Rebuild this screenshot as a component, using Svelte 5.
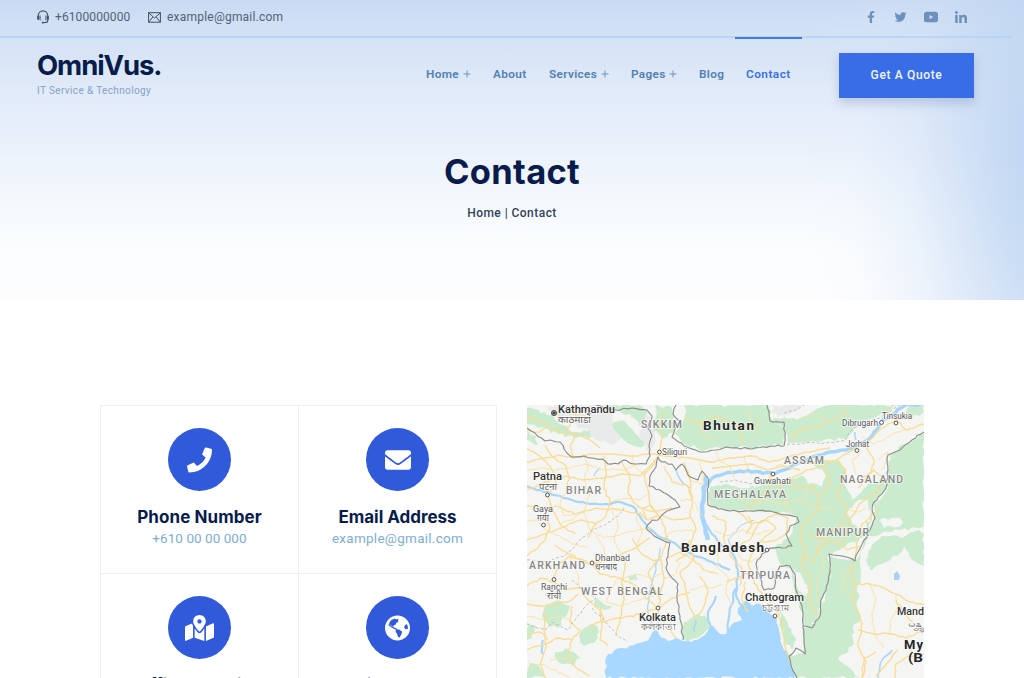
<script>
  const nav = [
    { label: 'Home', more: true, w: 45 },
    { label: 'About', w: 34 },
    { label: 'Services', more: true, w: 60 },
    { label: 'Pages', more: true, w: 46 },
    { label: 'Blog', w: 25 },
    { label: 'Contact', active: true, w: 45 }
  ];

  const social = [
    { name: 'facebook', box: '0 0 320 512', w: 8, d: 'M279.14 288l14.22-92.66h-88.91v-60.13c0-25.35 12.42-50.06 52.24-50.06h40.42V6.26S260.43 0 225.36 0c-73.22 0-121.08 44.38-121.08 124.72v70.62H22.89V288h81.39v224h100.17V288z' },
    { name: 'twitter', box: '0 0 512 512', w: 13, d: 'M459.37 151.716c.325 4.548.325 9.097.325 13.645 0 138.72-105.583 298.558-298.558 298.558-59.452 0-114.68-17.219-161.137-47.106 8.447.974 16.568 1.299 25.34 1.299 49.055 0 94.213-16.568 130.274-44.832-46.132-.975-84.792-31.188-98.112-72.772 6.498.974 12.995 1.624 19.818 1.624 9.421 0 18.843-1.3 27.614-3.573-48.081-9.747-84.143-51.98-84.143-102.985v-1.299c13.969 7.797 30.214 12.67 47.431 13.319-28.264-18.843-46.781-51.005-46.781-87.391 0-19.492 5.197-37.36 14.294-52.954 51.655 63.675 129.3 105.258 216.365 109.807-1.624-7.797-2.599-15.918-2.599-24.04 0-57.828 46.782-104.934 104.934-104.934 30.213 0 57.502 12.67 76.67 33.137 23.715-4.548 46.456-13.32 66.599-25.34-7.798 24.366-24.366 44.833-46.132 57.827 21.117-2.273 41.584-8.122 60.426-16.243-14.292 20.791-32.161 39.308-52.628 54.253z' },
    { name: 'youtube', box: '0 0 14 12', w: 14, d: 'M2.500 .8h9a2.500 2.500 0 0 1 2.500 2.500v5.400a2.500 2.500 0 0 1-2.500 2.500h-9a2.500 2.500 0 0 1-2.500-2.500V3.300a2.500 2.500 0 0 1 2.500-2.500zM5.500 3.900v4.300L9.200 6.050z' },
    { name: 'linkedin', box: '0 0 448 448', w: 12, d: 'M100.28 448H7.4V148.9h92.88zM53.79 108.1C24.09 108.1 0 83.5 0 53.8a53.79 53.79 0 0 1 107.58 0c0 29.7-24.1 54.3-53.79 54.3zM447.9 448h-92.68V302.4c0-34.7-.7-79.2-48.29-79.2-48.29 0-55.69 37.7-55.69 76.7V448h-92.78V148.9h89.08v40.8h1.3c12.4-23.5 42.69-48.3 87.88-48.3 94 0 111.28 61.9 111.28 142.3V448z' }
  ];

  const cards = [
    { title: 'Phone Number', ls: 0.08, text: '+610 00 00 000', tls: 0.05, box: '0 0 512 512', w: 25, d: 'M493.4 24.6l-104-24c-11.3-2.6-22.9 3.3-27.5 13.9l-48 112c-4.2 9.8-1.4 21.3 6.9 28l60.6 49.6c-36 76.7-98.9 140.5-177.2 177.2l-49.6-60.6c-6.8-8.3-18.2-11.1-28-6.9l-112 48C3.9 366.5-2 378.1.6 389.4l24 104C27.1 504.2 36.7 512 48 512c256.1 0 464-207.5 464-464 0-11.2-7.7-20.9-18.6-23.4z' },
    { title: 'Email Address', ls: -0.03, text: 'example@gmail.com', tls: 0.26, box: '0 0 512 512', w: 26, d: 'M502.3 190.8c3.9-3.1 9.7-.2 9.7 4.7V400c0 26.5-21.5 48-48 48H48c-26.5 0-48-21.5-48-48V195.6c0-5 5.7-7.8 9.7-4.7 22.4 17.4 52.1 39.5 154.1 113.6 21.1 15.4 56.7 47.8 92.2 47.6 35.7.3 72-32.8 92.3-47.6 102-74.1 131.6-96.3 154-113.7zM256 320c23.2.4 56.6-29.2 73.4-41.4 132.7-96.3 142.8-104.7 173.4-128.7 5.8-4.5 9.2-11.5 9.2-18.9v-19c0-26.5-21.5-48-48-48H48c-26.5 0-48 21.5-48 48v19c0 7.400 3.400 14.300 9.200 18.900 30.600 23.900 40.700 32.400 173.400 128.700 16.800 12.200 50.200 41.800 73.400 41.400z' },
    { title: 'Office Location', ls: -0.1, text: '', tls: 0, box: '0 0 576 512', w: 29, d: 'M288 0c-69.59 0-126 56.41-126 126 0 56.26 82.35 158.8 113.9 196.02 6.39 7.54 17.82 7.54 24.2 0C331.65 284.8 414 182.26 414 126 414 56.41 357.59 0 288 0zm0 168c-23.2 0-42-18.8-42-42s18.8-42 42-42 42 18.8 42 42-18.8 42-42 42zM20.12 215.95A32.006 32.006 0 0 0 0 245.66v250.32c0 11.32 11.43 19.06 21.94 14.86L160 448V214.92c-8.84-15.98-16.07-31.54-21.25-46.42L20.12 215.95zM288 359.67c-14.07 0-27.38-6.18-36.51-16.96-19.66-23.2-40.57-49.62-59.49-76.72v182l192 64V266c-18.92 27.09-39.82 53.52-59.49 76.72-9.13 10.77-22.44 16.95-36.51 16.95zm266.06-198.51L416 224v288l139.88-55.95A31.996 31.996 0 0 0 576 426.34V176.02c0-11.32-11.43-19.06-21.94-14.86z' },
    { title: 'Social Network', ls: -0.2, text: '', tls: 0, box: '0 0 74 74', w: 25, d: 'M37 0A37 37 0 1 1 37 74A37 37 0 1 1 37 0zM12 24L17 30L25 35L32 37L36 41L43 42L51 48L48 57L42 66L38 63L36 54L31 48L33 42L23 38L17 34L10 28zM12 23L18 14L28 9L33 12L39 9L39 19L33 22L32 27L26 29L25 34L17 29zM64 25L58 30L57 37L62 41L68 39L67 30z' }
  ];

  // Turns a sparse polyline into a finely wobbling one with a fixed pseudo-random sequence.
  function rough(str, amp = 1.2, close = false) {
    const p = str.split(' ').map((s) => s.split(',').map(Number));
    if (close) p.push(p[0]);
    let seed = Math.abs(Math.round(p[0][0] * 31 + p[0][1] * 17)) + 7;
    const rnd = () => ((seed = (seed * 16807) % 2147483647) / 2147483647 - 0.5) * 2 * amp;
    let d = 'M' + p[0];
    for (let i = 1; i < p.length; i++) {
      const [ax, ay] = p[i - 1];
      const [bx, by] = p[i];
      const n = Math.max(1, Math.round(Math.hypot(bx - ax, by - ay) / 4));
      for (let k = 1; k < n; k++) {
        d += `L${(ax + ((bx - ax) * k) / n + rnd()).toFixed(1)},${(ay + ((by - ay) * k) / n + rnd()).toFixed(1)}`;
      }
      d += `L${bx},${by}`;
    }
    return close ? d + 'Z' : d;
  }

  const forests = [
    '527,408 545,412 560,424 572,432 590,430 592,436 575,438 558,434 545,428 527,424',
    '606,405 640,405 648,412 640,424 630,414 612,412',
    '612,426 622,420 634,432 645,446 634,446 620,436',
    '655,405 672,408 674,432 662,438 654,430',
    '684,405 768,405 772,420 784,428 784,444 752,448 724,447 700,450 682,442 674,434 682,424 686,412',
    '772,420 800,418 830,405 898,405 882,416 860,424 848,438 820,442 788,444 784,428',
    '710,486 724,484 744,488 766,484 786,480 806,476 816,462 838,460 846,472 844,484 852,500 868,484 884,478 886,490 872,506 872,520 866,536 842,548 828,556 832,574 824,594 816,622 806,626 797,600 792,567 782,565 774,548 790,536 797,516 770,511 730,510 710,505',
    '924,434 906,444 890,456 888,478 886,492 874,506 875,522 866,540 860,554 858,590 868,614 854,624 852,646 838,658 860,678 797,678 788,656 804,654 804,628 816,624 826,592 831,572 830,556 856,560 866,536 900,530 924,526',
    '875,582 866,560 872,545 882,536 902,538 918,530 924,534 924,566 912,560 904,546 898,562 886,570',
    '924,412 912,418 906,410 912,405 924,405',
    '546,604 558,600 570,606 566,616 558,628 548,624 542,616',
    '584,628 594,624 599,632 595,642 584,646 579,636',
    '555,652 566,648 574,652 580,658 572,666 558,662',
    '527,622 536,626 532,638 527,640',
    '528,660 540,668 548,678 527,678',
    '684,622 698,614 708,618 710,628 700,636 688,642 682,636',
    '596,598 612,606 604,610 594,606',
    '527,430 536,436 538,445 527,440',
    '628,576 636,574 638,580 630,581',
    '780,606 786,620 796,640 792,650 784,640 780,622'
  ];

  const pale = [
    '846,512 858,500 868,500 870,516 864,530 852,524',
    '800,470 815,466 826,476 822,486 808,484',
    '876,566 890,560 900,552 912,564 924,570 924,678 862,678 852,652 864,630 858,610 858,586 866,574',
    '880,520 900,518 902,524 884,528',
    '794,568 808,586 806,596 798,590',
    '846,440 866,420 890,412 906,418 890,434 868,450'
  ];

  const hills = [
    '545,405 606,405 612,418 624,432 615,444 596,440 584,428 560,418',
    '640,412 654,420 656,440 650,452 640,440',
    '770,405 802,405 790,414 778,418'
  ];

  const sea = '606,678 605,662 608,654 622,648 640,643 650,637 656,630 662,638 668,641 676,638 683,641 694,640 705,635 712,625 718,632 726,634 732,624 742,620 738,608 746,600 752,606 760,604 768,612 776,616 779,630 782,645 788,655 795,678';

  const rivers = [
    { w: 3.4, p: '924,403 904,406 896,412 880,424 872,436 860,445 846,450 830,452 816,456 800,462 784,470 774,474 760,472 740,471 724,474 712,478 706,486' },
    { w: 4.5, p: '706,476 704,492 702,508 704,524 708,540' },
    { w: 2.2, p: '704,520 712,534 722,546 734,556 738,574 736,596 744,610' },
    { w: 2.2, p: '527,486 544,492 560,496 572,500 590,504 606,504 620,502 632,506 640,516 648,528 662,538 678,546 694,556 712,562 730,570' },
    { w: 1.4, p: '676,470 682,482 690,488' },
    { w: 1.2, p: '594,476 600,468' },
    { w: 1.2, p: '655,632 648,612 650,590 656,570 660,548' },
    { w: 1, p: '754,520 738,528 728,540 736,552' },
    { w: 1.6, p: '878,678 882,660 892,650' },
    { w: 1.6, p: '855,432 856,440' },
    { w: 2, p: '543,640 542,654' },
    { w: 2.2, p: '712,632 708,612 716,596' },
    { w: 2.2, p: '728,632 730,608 736,588' },
    { w: 1.6, p: '694,632 696,620' }
  ];

  const roads = [
    '527,416 545,424 560,432 575,434 590,440 600,448',
    '527,462 545,458 558,455 574,458 590,454 612,454 634,456 650,454 664,456 690,458 710,462 730,458 752,456 770,462 784,458 810,452 830,448',
    '527,448 540,456 552,470 556,484 548,494 552,508 560,524 575,534',
    '527,490 545,482 566,476 584,480 604,478 622,474 640,476 652,464 660,454',
    '604,456 606,470 604,488 610,502 606,516 594,526 588,538',
    '622,462 630,478 628,494 640,508 654,512 672,508',
    '545,445 552,456 566,466 570,478 566,492',
    '574,458 570,446 576,434',
    '656,462 644,474 648,490 650,504 662,520 668,540 660,558 664,578 660,598 658,612',
    '527,506 540,508 556,506 575,514 596,508 620,510 640,514',
    '527,540 545,534 562,528 580,520 596,524',
    '555,545 566,552 588,564 606,560 622,554 638,546 650,538',
    '592,564 600,574 618,578 636,586 646,598 658,610',
    '527,586 540,578 554,582 566,590 580,588 590,602 600,610 602,624 600,640 608,646',
    '554,580 558,566 570,556 588,562',
    '527,604 540,606 554,604 568,602 578,594',
    '572,606 570,622 580,630 572,640 568,654 576,668 590,676',
    '527,650 544,644 558,638 572,640',
    '545,612 544,630 546,648 540,664 546,678',
    '527,636 540,632 548,640',
    '602,622 622,618 640,614 658,608 672,598 690,592',
    '626,562 622,580 624,600 620,618 616,636',
    '590,628 604,618 600,606',
    '527,556 538,548 546,538 550,526 544,514',
    '658,612 668,626 676,638',
    '684,462 690,480 692,500 690,516 696,530 690,546 694,560',
    '664,466 672,482 688,486 692,500',
    '660,514 674,520 690,518',
    '694,560 680,572 686,590 690,608 696,620',
    '700,576 708,590 704,606 698,616',
    '712,516 726,522 724,540 730,556 742,568 740,586',
    '738,512 752,524 766,520 776,528 764,538 756,548 748,562 752,576 758,590 772,604 782,622 784,644 790,662',
    '720,552 736,548 750,540 758,524 776,514 788,518 786,534 776,540 762,542',
    '726,582 744,574 752,572',
    '745,582 742,600 748,612',
    '770,475 780,488 792,478 806,470 824,466 842,456 856,448 870,440 882,428 896,420 912,414',
    '712,468 730,466 750,464 768,470 784,466 800,470',
    '770,476 768,490 758,500 748,508',
    '790,478 798,488 812,486 820,498 816,512 806,520 800,536 806,548 802,564 810,580 808,596 814,612 818,616',
    '838,460 846,470 842,484 836,496 848,510 842,524 832,532 824,540 806,534',
    '862,478 874,470 884,480 876,492 862,502 852,516 846,532 840,546',
    '866,446 874,460 870,474 858,488',
    '826,468 830,484 822,494',
    '860,546 848,550 832,540 818,548 814,562 802,556',
    '878,510 862,524 858,540 854,560 852,580 854,602 862,624 858,646 866,662 862,678',
    '854,584 870,584 884,588 896,594 910,602 924,604',
    '858,630 874,634 890,634 906,638 924,630',
    '898,650 888,662 876,676',
    '876,652 864,658 862,678',
    '914,624 904,612 896,600',
    '895,678 896,664 908,656 924,654',
    '730,424 740,432 744,444',
    '684,418 700,424 716,416 730,424 750,428 762,420',
    '790,440 800,430 820,426 838,418 848,408',
    '886,410 896,418 906,430 924,424',
    '527,430 540,432 546,428',
    '660,450 662,438 658,426 664,412',
    '576,406 574,420 566,430',
    '640,512 648,520 658,516 652,506 642,508 646,520',
    '668,558 680,552 694,560 704,570 718,574',
    '676,562 686,554 690,540',
    '746,534 752,524 748,516',
    '632,538 640,552 652,560 662,560',
    '656,562 648,574 654,588 660,600'
  ];

  const lanes = [
    '527,470 540,468 552,470 570,468 584,464 604,470 624,470 640,464',
    '584,454 588,466 584,480 590,494 584,512',
    '632,456 636,468 646,476',
    '566,492 560,504 564,516 575,514',
    '610,502 624,498 640,500 650,492',
    '560,524 572,520 584,512 590,530 604,538 622,534 638,530 652,528',
    '612,510 618,524 614,540 622,554',
    '527,522 538,520 546,530 560,536 572,544 588,548',
    '570,556 578,574 580,588',
    '606,560 604,548 596,536',
    '638,546 642,530 636,516',
    '662,540 672,532 686,530 696,532',
    '664,578 676,574 680,562',
    '618,578 610,590 606,602 620,606 640,600 654,596',
    '622,580 636,574 650,578 662,574',
    '527,616 544,620 560,616 572,622',
    '550,660 566,658 574,662',
    '527,668 540,664 556,670 570,678',
    '690,480 704,484 700,462',
    '680,500 692,500 702,516',
    '714,530 726,536 742,530 756,534 770,530',
    '712,544 718,556 716,566 728,578 726,594 732,606',
    '736,548 742,560 750,562 762,556',
    '690,590 702,586 712,588 722,584',
    '716,452 720,462 730,466 734,478',
    '744,456 748,466 744,474',
    '776,466 790,462 806,464 820,460 836,462',
    '724,494 736,490 740,500 752,504 766,500 780,504 796,500 808,506',
    '788,490 784,504 792,512',
    '808,486 804,498 812,508 826,508 836,512',
    '848,510 858,512 866,508',
    '818,520 824,532 818,548 824,560 820,576 816,590 818,604',
    '854,602 846,592 844,576 852,566',
    '870,584 876,600 872,616 874,634 884,648',
    '896,594 898,610 890,622 890,634',
    '906,638 912,650 908,656',
    '862,436 874,444 884,440 896,432 910,430',
    '878,460 888,452 882,470',
    '862,452 852,462 856,474',
    '760,434 752,424 748,410',
    '700,424 704,436 716,440',
    '804,418 816,414 826,420',
    '556,412 566,420 580,414 590,420'
  ];

  const borders = [
    '527,428 531,431 535,433 545,441 550,440 560,442 567,453 572,457 584,456 592,458 602,459 608,464 618,464 624,460 634,464 646,464 650,456 649,446 652,436 648,428 652,416 647,410 632,408 616,410 604,408 596,405',
    '676,405 673,414 680,422 674,432 672,437 684,446 700,452 716,450 726,447 752,449 778,445 784,446 785,436 784,422 770,421 769,412 767,405',
    '658,457 662,462 672,464 676,470 682,464 688,475 698,480 702,471 708,478 708,505 718,509 730,511 750,511 770,511 780,514 797,517 799,522 790,526 786,534 792,546 782,548 770,548 762,554 756,564 760,578 764,590 774,588 776,572 780,566 790,566 795,574 796,590 802,606 803,628 805,654 796,648 789,656 792,668 797,678',
    '658,457 656,467 650,476 649,486 660,490 672,498 680,507 667,511 658,520 652,520 646,528 654,536 662,540 670,543 668,556 666,568 672,578 678,584 677,598 680,616 683,640',
    '924,432 912,440 900,450 888,455 888,470 886,488 874,502 872,508 875,518 870,530 864,540 858,552 855,561 842,556 829,554 830,572 826,590 821,600 820,616 812,628 803,626'
  ];

  const dashed = [
    '787,445 805,443 825,443 845,441 852,430 864,422 880,418 892,410 900,405',
    '784,413 796,410 804,405',
    '527,560 545,562 565,556 580,540 592,530 605,525 618,516 624,508',
    '572,580 580,588 596,598 586,606 575,620 568,630 552,622 545,630 527,624',
    '592,608 605,622 616,634 628,642',
    '720,482 735,480 750,484 760,480'
  ];

  const places = [
    { t: 'Kathmandu', x: 558, y: 413, w: 57, s: 11, c: 'city' },
    { t: 'काठमाडौं', x: 558, y: 423, w: 33, s: 10, c: 'local' },
    { t: 'SIKKIM', x: 641, y: 428, w: 41, s: 10.5, c: 'state' },
    { t: 'Bhutan', x: 703, y: 430, w: 51, s: 13.5, c: 'country' },
    { t: 'Dibrugarh', x: 842, y: 426, w: 36, s: 8.5, c: 'town' },
    { t: 'Tinsukia', x: 882, y: 419, w: 30, s: 8.5, c: 'town' },
    { t: 'Siliguri', x: 662, y: 455, w: 25, s: 8.5, c: 'town' },
    { t: 'Jorhat', x: 846, y: 447, w: 23, s: 8.5, c: 'town' },
    { t: 'ASSAM', x: 784, y: 464, w: 40, s: 10.5, c: 'state' },
    { t: 'Patna', x: 533, y: 480, w: 29, s: 11, c: 'city' },
    { t: 'पटना', x: 539, y: 490, w: 18, s: 10, c: 'local' },
    { t: 'BIHAR', x: 566, y: 494, w: 35, s: 10.5, c: 'state' },
    { t: 'Guwahati', x: 754, y: 484, w: 37, s: 8.5, c: 'town' },
    { t: 'NAGALAND', x: 840, y: 483, w: 63, s: 10.5, c: 'state' },
    { t: 'MEGHALAYA', x: 714, y: 498, w: 72, s: 10.5, c: 'state' },
    { t: 'Gaya', x: 533, y: 512, w: 20, s: 8.5, c: 'town' },
    { t: 'गया', x: 537, y: 521, w: 12, s: 9, c: 'local' },
    { t: 'MANIPUR', x: 816, y: 535.5, w: 53, s: 10.5, c: 'state' },
    { t: 'Bangladesh', x: 681, y: 552, w: 83, s: 13.5, c: 'country' },
    { t: 'Dhanbad', x: 595, y: 561, w: 35, s: 8.5, c: 'town' },
    { t: 'धनबाद', x: 595, y: 570, w: 22, s: 9, c: 'local' },
    { t: 'ARKHAND', x: 529, y: 568.5, w: 56, s: 10.5, c: 'state' },
    { t: 'TRIPURA', x: 740, y: 579, w: 50, s: 10.5, c: 'state' },
    { t: 'Ranchi', x: 541, y: 590, w: 26, s: 8.5, c: 'town' },
    { t: 'राँची', x: 547, y: 599, w: 14, s: 9, c: 'local' },
    { t: 'WEST BENGAL', x: 581, y: 595, w: 82, s: 10.5, c: 'state' },
    { t: 'Chattogram', x: 745, y: 600.5, w: 59, s: 11, c: 'city' },
    { t: 'চট্টগ্রাম', x: 762, y: 611, w: 27, s: 9, c: 'local' },
    { t: 'Kolkata', x: 639, y: 621, w: 37, s: 11, c: 'city' },
    { t: 'কলকাতা', x: 641, y: 630, w: 35, s: 9, c: 'local' },
    { t: 'Mand', x: 897, y: 615, w: 27, s: 11, c: 'city' },
    { t: 'မန္တ', x: 908, y: 627, w: 15, s: 8, c: 'local' },
    { t: 'My', x: 904, y: 649, w: 19, s: 13, c: 'country' },
    { t: '(B', x: 908, y: 662, w: 15, s: 12.5, c: 'country tight' }
  ];

  const dots = [
    [659.5, 452], [881.5, 422.5], [896, 423], [857, 450.5], [773, 474], [547.5, 495], [543.5, 525],
    [592, 563], [554, 579.5], [658, 608], [775, 616], [922, 630], [767, 550]
  ];
</script>

<div class="page">
  <header class="hero">
    <div class="topbar">
      <div class="contacts">
        <span class="item">
          <svg width="14" height="14" viewBox="0 0 14 14" fill="none" stroke="#46586b">
            <path d="M2.300 6V5.500a4.700 4.700 0 0 1 9.400 0V10.500a2 2 0 0 1-2 2H7.500" stroke-width="1.200" />
            <path d="M2.300 5.800v4M11.700 5.800v4" stroke-width="2.400" />
            <path d="M4.300 5.500v5M9.700 5.500v5" stroke-width=".7" />
            <path d="M5.800 12.600h2.600" stroke-width="1.600" />
          </svg>
          <span class="phone">+6100000000</span>
        </span>
        <span class="item">
          <svg width="13" height="11" viewBox="0 0 13 11" fill="none" stroke="#3f5062" stroke-width="1">
            <rect x=".6" y=".7" width="11.800" height="9.500" />
            <path d="M.8 1l5.700 5L12.200 1M.8 10l4-5M12.200 10l-4-5" />
          </svg>
          <span class="mail">example@gmail.com</span>
        </span>
      </div>
      <div class="social">
        {#each social as s (s.name)}
          <span class="soc"><svg width={s.w} height="12" viewBox={s.box}><path d={s.d} fill-rule="evenodd" fill="#6c91bd" /></svg></span>
        {/each}
      </div>
    </div>

    <div class="main">
      <div class="brand">
        <div class="logo">OmniVus.</div>
        <div class="tag">IT Service &amp; Technology</div>
      </div>
      <nav>
        {#each nav as n (n.label)}
          <span class="link" class:active={n.active} style:width="{n.w}px">
            {n.label}{#if n.more}<svg width="8" height="8" viewBox="0 0 8 8"><path d="M4 .5v7M.5 4h7" stroke="#6f95c0" stroke-width="1" /></svg>{/if}
          </span>
        {/each}
      </nav>
      <div class="quote">Get A Quote</div>
    </div>

    <h1>Contact</h1>
    <p class="crumb">Home&nbsp;|&nbsp;Contact</p>
  </header>

  <main>
    <section class="cards">
      {#each cards as c (c.title)}
        <article>
          <div class="disc"><svg width={c.w} height="26" viewBox={c.box}><path d={c.d} fill="#fff" fill-rule="evenodd" /></svg></div>
          <h2 style:letter-spacing="{c.ls}px">{c.title}</h2>
          <p style:letter-spacing="{c.tls}px">{c.text}</p>
        </article>
      {/each}
    </section>

    <svg class="map" width="397" height="273" viewBox="527 405 397 273">
      <rect x="527" y="405" width="397" height="273" fill="#f5f5f3" />
      {#each hills as h}<path d={rough(h, 2, true)} fill="#e9ebea" />{/each}
      {#each forests as f}<path d={rough(f, 2, true)} fill="#cbebcf" />{/each}
      {#each pale as f}<path d={rough(f, 2, true)} fill="#f5f5f3" />{/each}
      <path d={rough(sea, 1.6, true)} fill="#a8d8ff" />
      <path d="M894 574l3-3 3 5-1 4-5 0z" fill="#a8d0f8" />
      {#each rivers as r}<path d={rough(r.p, 1.2)} fill="none" stroke="#a8d6fb" stroke-width={r.w} stroke-linejoin="round" />{/each}
      {#each lanes as r}<path d={rough(r, 1)} fill="none" stroke="#fae3a6" stroke-width="1" stroke-linejoin="round" />{/each}
      {#each roads as r}<path d={rough(r, 0.9)} fill="none" stroke="#f9dc91" stroke-width="1.300" stroke-linejoin="round" />{/each}
      {#each dashed as b}<path d={rough(b, 0.8)} fill="none" stroke="#b4b4b4" stroke-width=".8" stroke-dasharray="3 2" />{/each}
      {#each borders as b}<path d={rough(b, 0.9)} fill="none" stroke="#8b8b8b" stroke-width="1.100" stroke-linejoin="round" />{/each}
      {#each dots as [x, y]}<circle cx={x} cy={y} r="1.900" fill="#fff" stroke="#555" stroke-width="1" />{/each}
      <circle cx="554" cy="413" r="2.500" fill="#333" stroke="#555" stroke-width="1" />
      <circle cx="554" cy="413" r="1.600" fill="none" stroke="#ddd" stroke-width=".5" />
      {#each places as p}
        <text class={p.c} x={p.x} y={p.y} font-size={p.s} textLength={p.w} lengthAdjust={p.c === 'state' || p.c === 'country' ? 'spacing' : 'spacingAndGlyphs'}>{p.t}</text>
      {/each}
    </svg>
  </main>
</div>

<style>
  :global(body) { background: #fff; overflow: hidden; }
  .page { width: 1024px; height: 678px; overflow: hidden; font-family: Roboto, "Liberation Sans", sans-serif; background: #fff; }
  .hero {
    height: 300px;
    background:
      radial-gradient(ellipse 270px 520px at 1070px 180px, rgba(178, 205, 240, .9) 0%, rgba(186, 210, 241, .7) 27%, rgba(205, 222, 245, .33) 58%, rgba(225, 236, 250, .1) 80%, rgba(230, 240, 252, 0) 100%),
      linear-gradient(180deg, #c8d9f2 0, #cfdff5 20px, #d5e3f5 45px, #e2ebf9 95px, #ebf1fb 150px, #f5f9fd 205px, #fbfdfe 250px, #fdfdfe 300px);
  }
  .topbar {
    display: flex; justify-content: space-between; align-items: center;
    width: 1011px; height: 38px; box-sizing: border-box;
    padding: 0 44px 2px 36px; border-bottom: 2px solid rgba(172, 208, 248, .7);
  }
  .contacts { display: flex; gap: 18px; color: #526275; font-size: 12px; }
  .item { display: flex; align-items: center; gap: 5px; height: 16px; }
  .phone { letter-spacing: .1px; width: 75px; white-space: nowrap; }
  .mail { letter-spacing: .22px; white-space: nowrap; padding-left: 1px; }
  .social { display: flex; gap: 17px; }
  .soc { width: 13px; display: flex; justify-content: center; }
  .soc svg { flex: none; }
  .main { display: flex; height: 90px; padding-left: 37px; }
  .brand { width: 389px; padding-top: 11px; }
  .logo { font: 700 27.500px/32px Inter, sans-serif; letter-spacing: -1.080px; color: #071c4b; }
  .tag { font-size: 10px; line-height: 12px; margin-top: 4px; letter-spacing: .37px; color: #86a3c8; }
  nav { display: flex; gap: 22px; margin-top: -1px; width: 413px; }
  .link { display: flex; align-items: center; justify-content: space-between; height: 74px; font-weight: 600; font-size: 11.800px; letter-spacing: .34px; color: #5380b3; white-space: nowrap; }
  .link.active { color: #3a70ea; border-top: 2px solid #4178ee; height: 70px; padding: 0 11px; margin: 0 -11px; letter-spacing: .48px; }
  .quote {
    width: 135px; height: 45px; margin-top: 14.500px; background: #396de8; color: #f2f7ff;
    display: grid; place-items: center; font-weight: 500; font-size: 12px; letter-spacing: .65px;
    box-shadow: 0 5px 10px rgba(80, 110, 160, .28);
  }
  h1 { margin: 22px 0 0; text-align: center; font: 700 34.500px/44px Inter, sans-serif; letter-spacing: .3px; color: #071c4b; }
  .crumb { margin: 11px 0 0; text-align: center; font-weight: 500; font-size: 12px; line-height: 16px; letter-spacing: .46px; color: #34425a; }
  main { display: flex; gap: 30px; padding: 105px 0 0 100px; height: 273px; overflow: hidden; }
  .cards { width: 397px; box-sizing: border-box; display: grid; grid-template-columns: 198px 198px; grid-auto-rows: 168px; border-top: 1px solid #efeff1; border-left: 1px solid #efeff1; }
  article { box-sizing: border-box; border-right: 1px solid #efeff1; border-bottom: 1px solid #efeff1; padding-top: 22px; text-align: center; }
  .disc { width: 63px; height: 63px; margin: 0 auto; border-radius: 50%; background: #315adb; display: grid; place-items: center; }
  h2 { margin: 15px 0 0; font: 700 17px/22px Inter, sans-serif; color: #071c4b; white-space: nowrap; }
  article p { margin: 1px 0 0; font-size: 13.500px; line-height: 18px; color: #80adce; }
  .map { flex: none; display: block; }
  .map text { font-family: Roboto, "Noto Sans", sans-serif; paint-order: stroke; stroke: rgba(255, 255, 255, .75); stroke-width: 1.600px; }
  .map .city { fill: #333; font-weight: 500; }
  .map .town { fill: #555; }
  .map .local { fill: #606060; }
  .map .state { fill: #858585; font-weight: 500; }
  .map .country { fill: #262626; font-weight: 700; }
</style>
